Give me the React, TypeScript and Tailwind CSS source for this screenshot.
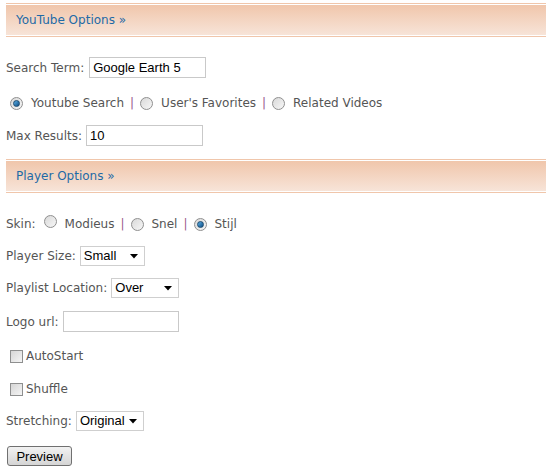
import React from "react";

const font = { fontFamily: '"DejaVu Sans", Tahoma, sans-serif' };

function Header({ title }: { title: string }) {
  return (
    <div className="border-y border-[#f0c6ab] py-[1px] bg-white">
      <div className="h-[30px] bg-gradient-to-b from-[#f0c6ab] to-[#f7e4d8] flex items-center pl-[10px] text-[12px] text-[#1e6aa6]">
        {title} »
      </div>
    </div>
  );
}

function Radio({ checked }: { checked?: boolean }) {
  return (
    <span className="inline-flex items-center justify-center w-[13px] h-[13px] rounded-full border border-[#8f8f8f] bg-gradient-to-br from-[#d9d9d9] to-[#f7f7f7] shrink-0">
      {checked && (
        <span className="w-[7px] h-[7px] rounded-full bg-gradient-to-br from-[#5cb0e6] to-[#0d4f86] border border-[#1b4a6f]" />
      )}
    </span>
  );
}

function Sep() {
  return <span className="text-[#9a5b8c] mx-[6px]">|</span>;
}

function Checkbox() {
  return (
    <span className="inline-block w-[13px] h-[13px] border border-[#8e8f8f] bg-gradient-to-br from-[#d6d6d6] to-[#f5f5f5] shrink-0" />
  );
}

function Select({ value, width }: { value: string; width: number }) {
  return (
    <span
      className="inline-flex items-center justify-between h-[20px] border border-[#cfcfcf] bg-white pl-[3px] pr-[6px] text-[13px] text-black"
      style={{ width, fontFamily: '"Liberation Sans", Arial, sans-serif' }}
    >
      <span>{value}</span>
      <svg width="8" height="5" viewBox="0 0 8 5">
        <path d="M0 0H8L4 4.5Z" fill="#000" />
      </svg>
    </span>
  );
}

function TextInput({ value, width }: { value?: string; width: number }) {
  return (
    <span
      className="inline-flex items-center h-[21px] border border-[#c9c9c9] bg-white pl-[3px] text-[13px] text-black"
      style={{ width, fontFamily: '"Liberation Sans", Arial, sans-serif' }}
    >
      {value}
    </span>
  );
}

export default function App() {
  return (
    <div className="w-[553px] h-[474px] bg-white text-[12px] text-[#555] pl-[6px] pr-[7px] pt-[3px]" style={font}>
      <Header title="YouTube Options" />
      <div className="flex items-center gap-[5px] mt-[20px] h-[21px]">
        <span>Search Term:</span>
        <TextInput value="Google Earth 5" width={117} />
      </div>
      <div className="flex items-center mt-[17px] pl-[4px] h-[16px]">
        <Radio checked />
        <span className="ml-[8px]">Youtube Search</span>
        <Sep />
        <Radio />
        <span className="ml-[8px]">User's Favorites</span>
        <Sep />
        <Radio />
        <span className="ml-[8px]">Related Videos</span>
      </div>
      <div className="flex items-center gap-[4px] mt-[14px] h-[21px]">
        <span>Max Results:</span>
        <TextInput value="10" width={117} />
      </div>
      <div className="mt-[13px]">
        <Header title="Player Options" />
      </div>
      <div className="flex items-center mt-[23px] h-[16px]">
        <span>Skin:</span>
        <span className="ml-[8px]"><Radio /></span>
        <span className="ml-[8px]">Modieus</span>
        <Sep />
        <Radio />
        <span className="ml-[8px]">Snel</span>
        <Sep />
        <Radio checked />
        <span className="ml-[8px]">Stijl</span>
      </div>
      <div className="flex items-center gap-[4px] mt-[14px] h-[20px]">
        <span>Player Size:</span>
        <Select value="Small" width={65} />
      </div>
      <div className="flex items-center gap-[4px] mt-[12px] h-[20px]">
        <span>Playlist Location:</span>
        <Select value="Over" width={68} />
      </div>
      <div className="flex items-center gap-[4px] mt-[13px] h-[21px]">
        <span>Logo url:</span>
        <TextInput width={116} />
      </div>
      <div className="flex items-center gap-[3px] mt-[16px] pl-[4px] h-[16px]">
        <Checkbox />
        <span>AutoStart</span>
      </div>
      <div className="flex items-center gap-[3px] mt-[17px] pl-[4px] h-[16px]">
        <Checkbox />
        <span>Shuffle</span>
      </div>
      <div className="flex items-center gap-[4px] mt-[14px] h-[20px]">
        <span>Stretching:</span>
        <Select value="Original" width={68} />
      </div>
      <div className="mt-[15px] pl-[1px]">
        <button
          className="w-[65px] h-[20px] rounded-[3px] border border-[#707070] bg-gradient-to-b from-[#f2f2f2] to-[#d5d5d5] text-[13px] text-black leading-none"
          style={{ fontFamily: '"Liberation Sans", Arial, sans-serif' }}
        >
          Preview
        </button>
      </div>
    </div>
  );
}
